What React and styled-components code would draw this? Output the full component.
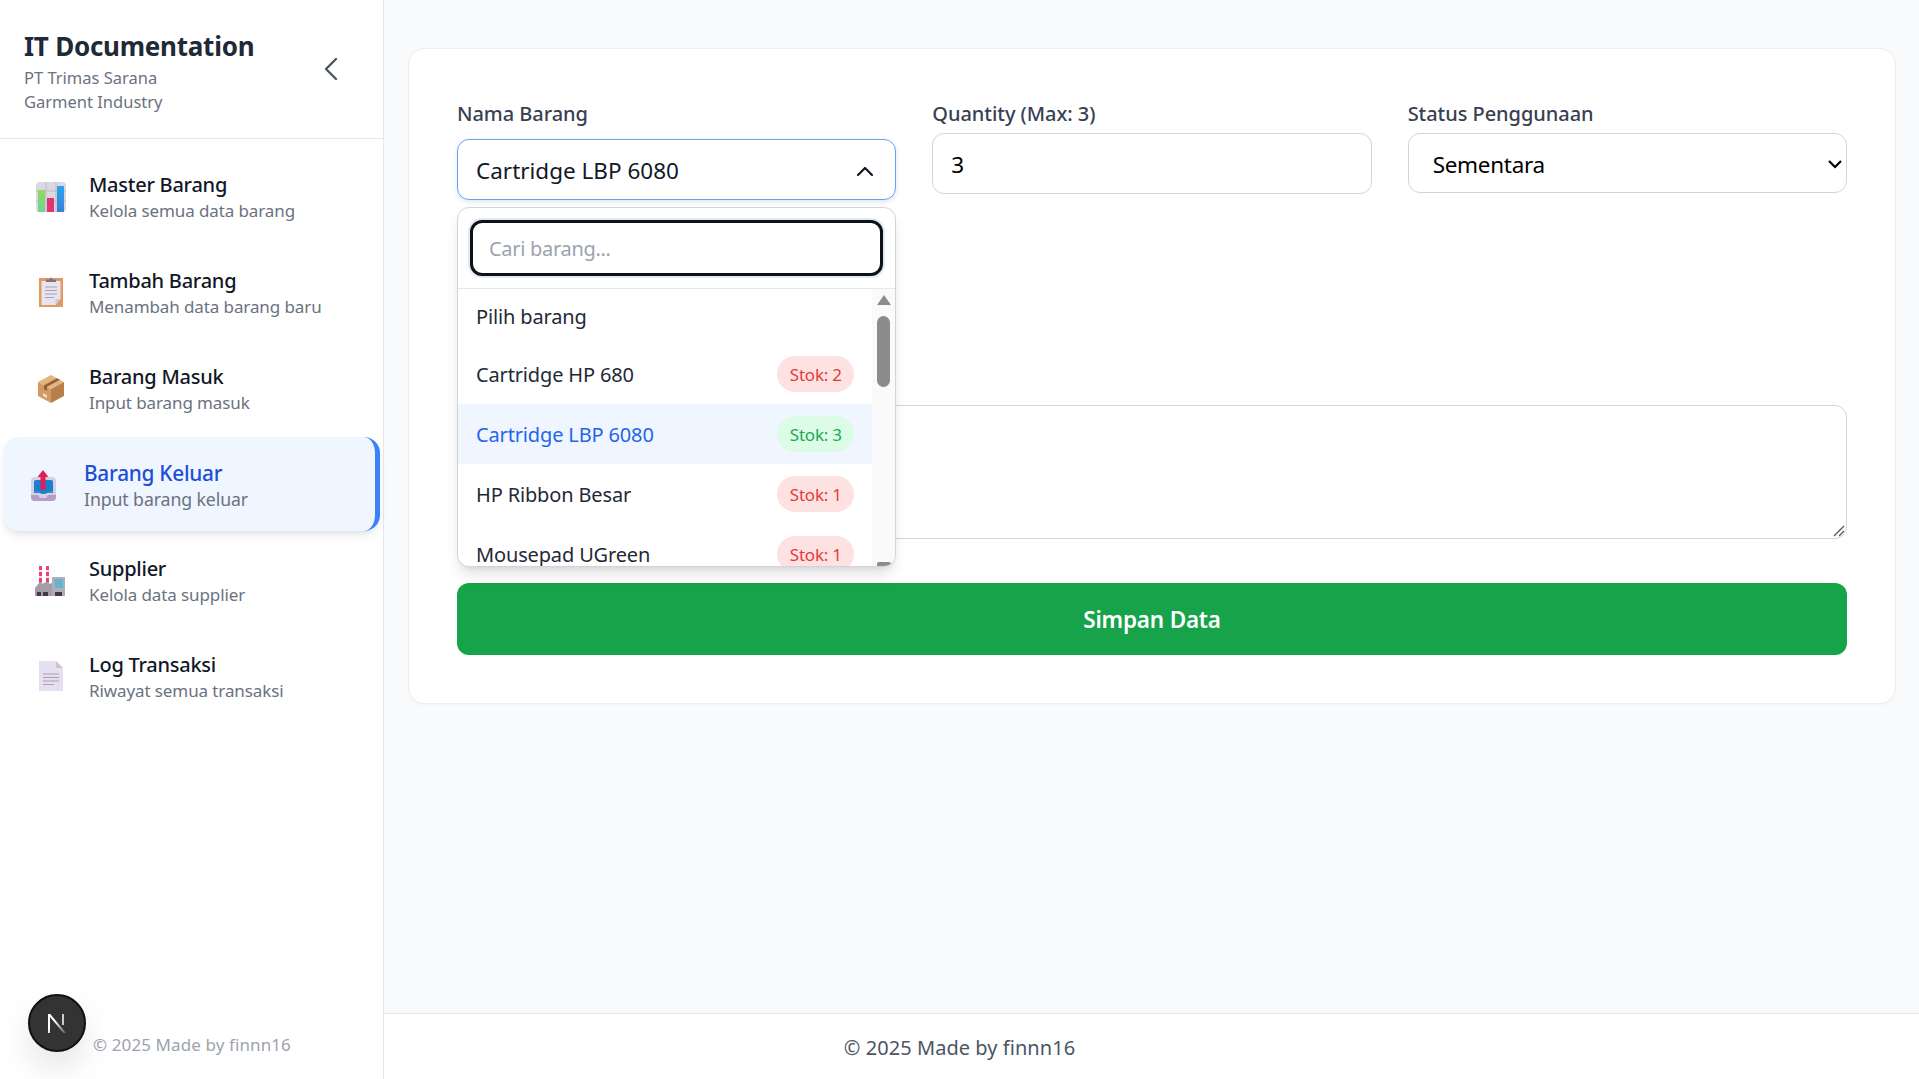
import React from "react"
import styled, { createGlobalStyle } from "styled-components"

const GlobalStyle = createGlobalStyle`
  * { box-sizing: border-box; }
  html, body { margin: 0; height: 100%; }
  body {
    font-family: "Noto Sans", "Open Sans", sans-serif;
    background: #f9fafb;
    color: #111827;
  }
`

const Shell = styled.div`
  position: relative;
  display: flex;
  height: 100vh;
  overflow: hidden;
`

const Sidebar = styled.aside`
  width: 384px;
  flex: none;
  display: flex;
  flex-direction: column;
  background: #fff;
  border-right: 1px solid #e5e7eb;
`

const SidebarHeader = styled.header`
  height: 139px;
  flex: none;
  display: flex;
  align-items: center;
  justify-content: space-between;
  padding: 0 41px 0 24px;
  border-bottom: 1px solid #e5e7eb;
`

const BrandBlock = styled.div`
  margin-top: 5px;
`

const Brand = styled.h1`
  margin: 0 0 3px;
  font-size: 26px;
  line-height: 34px;
  font-weight: 700;
  letter-spacing: -0.25px;
  color: #1f2937;
`

const Company = styled.p`
  margin: 0;
  width: 170px;
  font-size: 16.5px;
  line-height: 24px;
  color: #6b7280;
`

const Nav = styled.nav`
  flex: 1;
  display: flex;
  flex-direction: column;
  padding-top: 9px;
`

const NavItem = styled.a`
  height: 96px;
  flex: none;
  display: flex;
  align-items: center;
  gap: 22px;
  padding-left: ${p => (p.$active ? "28px" : "36px")};
  ${p => p.$active && `
    margin: 1px 3px 1px 3px;
    height: 94px;
    border-radius: 16px;
    background: #eff6ff;
    border-right: 5px solid #3b82f6;
    box-shadow: 0 6px 12px -3px rgba(0, 0, 0, 0.1), 0 3px 5px -2px rgba(0, 0, 0, 0.06);
  `}
`

const NavIcon = styled.svg`
  width: 32px;
  height: 32px;
  flex: none;
  margin-left: -1px;
  overflow: visible;
`

const NavText = styled.div`
  padding-top: 2px;
`

const NavTitle = styled.div`
  font-size: ${p => (p.$active ? "20.8px" : "20px")};
  line-height: 28px;
  font-weight: 500;
  letter-spacing: -0.25px;
  color: ${p => (p.$active ? "#1d4ed8" : "#111827")};
`

const NavSub = styled.div`
  font-size: ${p => (p.$active ? "17.7px" : "17px")};
  line-height: 24px;
  letter-spacing: -0.1px;
  color: #6b7280;
`

const SidebarFooter = styled.div`
  height: 46px;
  flex: none;
  padding: 0 0 0 93px;
  font-size: 17px;
  line-height: 24px;
  letter-spacing: 0.1px;
  color: #9ca3af;
`

const DevBadge = styled.div`
  position: absolute;
  left: 28px;
  top: 994px;
  width: 58px;
  height: 58px;
  display: flex;
  align-items: center;
  justify-content: center;
  border-radius: 50%;
  background: #333;
  border: 2px solid #111;
  box-shadow: 0 16px 32px rgba(0, 0, 0, 0.1);
`

const Main = styled.main`
  flex: 1;
  min-width: 0;
  display: flex;
  flex-direction: column;
`

const Content = styled.div`
  flex: 1;
  padding: 48px 23px 0 24px;
`

const Card = styled.section`
  height: 656px;
  padding: 48px;
  display: flex;
  flex-direction: column;
  background: #fff;
  border: 1px solid #eceef1;
  border-radius: 16px;
  box-shadow: 0 1px 2px rgba(0, 0, 0, 0.03);
`

const Fields = styled.div`
  display: grid;
  grid-template-columns: repeat(3, 1fr);
  column-gap: 36px;
  height: 308px;
  flex: none;
`

const Field = styled.div`
  position: relative;
  display: flex;
  flex-direction: column;
  align-items: stretch;
`

const Label = styled.label`
  height: 34px;
  font-size: 20px;
  line-height: 34px;
  font-weight: 500;
  letter-spacing: -0.05px;
  color: #374151;
`

const SelectButton = styled.div`
  height: 61px;
  margin-top: 8px;
  display: flex;
  align-items: center;
  justify-content: space-between;
  padding: 2px 21px 0 18px;
  border: 1px solid #60a5fa;
  border-radius: 12px;
  background: #fff;
  box-shadow: 0 2px 5px rgba(0, 0, 0, 0.1);
  font-size: 22.5px;
  color: #111827;
`

const TextBox = styled.div`
  height: ${p => (p.$select ? "60px" : "61px")};
  margin-top: 2px;
  display: flex;
  align-items: center;
  justify-content: space-between;
  padding: 2px ${p => (p.$select ? "3px" : "18px")} 0 ${p => (p.$select ? "24px" : "18px")};
  border: 1px solid #d1d5db;
  border-radius: 12px;
  background: #fff;
  font-size: 22.5px;
  letter-spacing: -0.3px;
  color: #000;
`

const Dropdown = styled.div`
  position: absolute;
  left: 0;
  right: 0;
  top: 110px;
  z-index: 5;
  height: 360px;
  display: flex;
  flex-direction: column;
  overflow: hidden;
  background: #fff;
  border: 1px solid #d1d5db;
  border-radius: 12px;
  box-shadow: 0 10px 15px -3px rgba(0, 0, 0, 0.12), 0 4px 6px -4px rgba(0, 0, 0, 0.1);
`

const SearchWrap = styled.div`
  height: 81px;
  flex: none;
  padding: 12px 12px 0;
  border-bottom: 1px solid #e5e7eb;
`

const SearchBox = styled.div`
  height: 56px;
  display: flex;
  align-items: center;
  padding: 0 16px;
  border: 3px solid #111;
  border-radius: 12px;
  box-shadow: 0 0 0 2px #dbeafe;
  font-size: 20px;
  letter-spacing: -0.3px;
  color: #9ca3af;
`

const ListArea = styled.div`
  flex: 1;
  min-height: 0;
  display: flex;
`

const List = styled.ul`
  flex: 1;
  min-width: 0;
  margin: 0;
  padding: 0;
  list-style: none;
  overflow: hidden;
`

const Option = styled.li`
  height: ${p => (p.$short ? "55px" : "60px")};
  display: flex;
  align-items: center;
  justify-content: space-between;
  padding: 0 18px;
  font-size: 20px;
  letter-spacing: -0.15px;
  color: ${p => (p.$selected ? "#2563eb" : "#1f2937")};
  background: ${p => (p.$selected ? "#eff6ff" : "transparent")};
`

const Stock = styled.span`
  height: 36px;
  width: 77px;
  display: flex;
  align-items: center;
  justify-content: center;
  border-radius: 18px;
  font-size: 17px;
  letter-spacing: -0.2px;
  color: ${p => (p.$ok ? "#22a855" : "#e23b3b")};
  background: ${p => (p.$ok ? "#dcfce7" : "#fee2e2")};
`

const Scrollbar = styled.div`
  width: 23px;
  flex: none;
  position: relative;
  display: flex;
  flex-direction: column;
  align-items: center;
  background: #fafafa;
`

const ScrollThumb = styled.div`
  width: 13px;
  height: 71px;
  margin-top: 11px;
  border-radius: 7px;
  background: #8c8c8c;
`

const ScrollArrow = styled.svg`
  width: 14px;
  height: 10px;
  margin-top: 6px;
  flex: none;
  fill: #8c8c8c;
`

const ScrollEnd = styled.div`
  position: absolute;
  bottom: 0;
  width: 14px;
  height: 4px;
  border-radius: 2px 2px 0 0;
  background: #8c8c8c;
`

const NoteRow = styled.div`
  height: 134px;
  flex: none;
  position: relative;
  border: 1px solid #d1d5db;
  border-radius: 12px;
`

const ResizeGrip = styled.svg`
  position: absolute;
  right: 1px;
  bottom: 1px;
  width: 14px;
  height: 14px;
  stroke: #555;
  stroke-width: 1.3;
`

const SaveButton = styled.button`
  height: 72px;
  margin-top: 44px;
  padding-top: 2px;
  flex: none;
  border: 0;
  border-radius: 12px;
  background: #16a34a;
  color: #fff;
  font-family: inherit;
  font-size: 22.5px;
  font-weight: 600;
  letter-spacing: -0.2px;
`

const PageFooter = styled.footer`
  height: 66px;
  flex: none;
  display: flex;
  align-items: center;
  justify-content: center;
  padding: 2px 384px 0 0;
  background: #fff;
  border-top: 1px solid #e5e7eb;
  font-size: 20px;
  letter-spacing: 0.05px;
  color: #4b5563;
`

const ChartIcon = () => (
  <NavIcon viewBox="0 0 32 32">
    <defs>
      <linearGradient id="gGreen" x1="0" y1="0" x2="0" y2="1">
        <stop offset="0" stopColor="#8fdc5c" />
        <stop offset="1" stopColor="#6cd49a" />
      </linearGradient>
      <linearGradient id="gBlue" x1="0" y1="0" x2="0" y2="1">
        <stop offset="0" stopColor="#2aa4f4" />
        <stop offset="1" stopColor="#3b7fd8" />
      </linearGradient>
    </defs>
    <rect x="1" y="2" width="30" height="30" rx="3.500" fill="#dcd8e2" />
    <path d="M11 2v30M21 2v30M1 11h30M1 21h30" stroke="#bdb9c6" strokeWidth="1" />
    <rect x="3" y="10" width="7" height="22" fill="url(#gGreen)" />
    <rect x="12" y="18" width="7" height="14" fill="#e5336f" />
    <rect x="22" y="6" width="7" height="26" fill="url(#gBlue)" />
  </NavIcon>
)

const ClipboardIcon = () => (
  <NavIcon viewBox="0 0 32 32">
    <rect x="4" y="2" width="24" height="29" fill="#e29a5c" />
    <path d="M6.500 5h19v18l-5 6h-14z" fill="#e8e3ef" />
    <path d="M25.500 23l-5 6v-6z" fill="#cfc6d8" />
    <path d="M10 11h12M10 14.500h12M10 18h12M10 21.500h9" stroke="#a79fb3" strokeWidth="1.200" />
    <path d="M11 6V3.500h3.500L16 1l1.500 2.500H21V6z" fill="#7d7480" />
  </NavIcon>
)

const BoxIcon = () => (
  <NavIcon viewBox="0 0 32 32">
    <path d="M16 3 29 10 16 17 3 10z" fill="#e6b57f" />
    <path d="M3 10 16 17V31L3 24z" fill="#d49a63" />
    <path d="M29 10 16 17V31L29 24z" fill="#b97f4a" />
    <path d="M9 13.200 22 6.200l3 1.600-13 7v4l-3-1.600z" fill="#94603a" />
    <path d="M8 21l4 2v3l-4-2z" fill="#e8dccf" />
  </NavIcon>
)

const OutboxIcon = () => (
  <NavIcon viewBox="0 0 32 32">
    <rect x="1" y="9" width="25" height="24" rx="4" fill="#d8cfe3" />
    <path d="M1 27h7l2 3h6l2-3h8v2a4 4 0 0 1-4 4H5a4 4 0 0 1-4-4z" fill="#b79cc9" />
    <rect x="4" y="12" width="19" height="13" rx="2" fill="#1b7fd0" />
    <path d="M4 23h5l2 3h5l2-3h5v2H4z" fill="#2a90da" />
    <path d="M13 2 18.500 9h-3v13h-5V9h-3z" fill="#e01e5a" />
  </NavIcon>
)

const FactoryIcon = () => (
  <NavIcon viewBox="0 0 32 32">
    <path d="M4 2h3v18H4zM11 2h3v18h-3z" fill="#f3dde6" />
    <path d="M4 2h3v4H4zM4 8h3v4H4zM4 14h3v4H4zM11 2h3v4h-3zM11 8h3v4h-3zM11 14h3v4h-3z" fill="#ea3f77" />
    <path d="M0 32V24l4-5v-1h3v2l4-2h3v2l3-1v13z" fill="#a49ca6" />
    <rect x="17" y="13" width="13" height="19" fill="#b2acb6" />
    <path d="M20 15h8v9h-8z" fill="#3fc0f0" />
    <path d="M22.700 15v9M25.300 15v9M20 18h8M20 21h8" stroke="#a49ca6" strokeWidth="0.800" />
    <path d="M2 28h4v4H2zM8 28h5v4H8zM20 28h7v4h-7z" fill="#433946" />
  </NavIcon>
)

const DocIcon = () => (
  <NavIcon viewBox="0 0 32 32">
    <path d="M4 1h17l7 7v23H4z" fill="#e6dff0" />
    <path d="M21 1l7 7h-7z" fill="#cbc2d6" />
    <path d="M8 14h16M8 17.500h16M8 21h16M8 24.500h11" stroke="#a99fb5" strokeWidth="1.200" />
  </NavIcon>
)

const navItems = [
  { title: "Master Barang", sub: "Kelola semua data barang", Icon: ChartIcon },
  { title: "Tambah Barang", sub: "Menambah data barang baru", Icon: ClipboardIcon },
  { title: "Barang Masuk", sub: "Input barang masuk", Icon: BoxIcon },
  { title: "Barang Keluar", sub: "Input barang keluar", Icon: OutboxIcon, active: true },
  { title: "Supplier", sub: "Kelola data supplier", Icon: FactoryIcon },
  { title: "Log Transaksi", sub: "Riwayat semua transaksi", Icon: DocIcon },
]

const options = [
  { name: "Cartridge HP 680", stock: 2 },
  { name: "Cartridge LBP 6080", stock: 3, selected: true },
  { name: "HP Ribbon Besar", stock: 1 },
  { name: "Mousepad UGreen", stock: 1 },
]

export default function App() {
  return (
    <>
      <GlobalStyle />
      <Shell>
        <Sidebar>
          <SidebarHeader>
            <BrandBlock>
              <Brand>IT Documentation</Brand>
              <Company>PT Trimas Sarana Garment Industry</Company>
            </BrandBlock>
            <svg width="22" height="26" viewBox="0 0 22 26" fill="none" stroke="#4b5563" strokeWidth="2.400" strokeLinecap="round" strokeLinejoin="round">
              <path d="M16 3 6 13l10 10" />
            </svg>
          </SidebarHeader>
          <Nav>
            {navItems.map(({ title, sub, Icon, active }) => (
              <NavItem key={title} $active={active}>
                <Icon />
                <NavText>
                  <NavTitle $active={active}>{title}</NavTitle>
                  <NavSub $active={active}>{sub}</NavSub>
                </NavText>
              </NavItem>
            ))}
          </Nav>
          <SidebarFooter>© 2025 Made by finnn16</SidebarFooter>
        </Sidebar>
        <Main>
          <Content>
            <Card>
              <Fields>
                <Field>
                  <Label>Nama Barang</Label>
                  <SelectButton>
                    Cartridge LBP 6080
                    <svg width="18" height="12" viewBox="0 0 18 12" fill="none" stroke="#111827" strokeWidth="2.200" strokeLinecap="round" strokeLinejoin="round">
                      <path d="M2 10 9 3l7 7" />
                    </svg>
                  </SelectButton>
                  <Dropdown>
                    <SearchWrap>
                      <SearchBox>Cari barang...</SearchBox>
                    </SearchWrap>
                    <ListArea>
                      <List>
                        <Option $short>Pilih barang</Option>
                        {options.map(o => (
                          <Option key={o.name} $selected={o.selected}>
                            {o.name}
                            <Stock $ok={o.stock > 2}>Stok: {o.stock}</Stock>
                          </Option>
                        ))}
                      </List>
                      <Scrollbar>
                        <ScrollArrow viewBox="0 0 14 10"><path d="M7 0 14 10H0z" /></ScrollArrow>
                        <ScrollThumb />
                        <ScrollEnd />
                      </Scrollbar>
                    </ListArea>
                  </Dropdown>
                </Field>
                <Field>
                  <Label>Quantity (Max: 3)</Label>
                  <TextBox>3</TextBox>
                </Field>
                <Field>
                  <Label>Status Penggunaan</Label>
                  <TextBox $select>
                    Sementara
                    <svg width="16" height="10" viewBox="0 0 16 10" fill="none" stroke="#000" strokeWidth="2.200">
                      <path d="M2 2l6 6 6-6" />
                    </svg>
                  </TextBox>
                </Field>
              </Fields>
              <NoteRow>
                <ResizeGrip viewBox="0 0 14 14"><path d="M13 3 3 13M13 8l-5 5" /></ResizeGrip>
              </NoteRow>
              <SaveButton>Simpan Data</SaveButton>
            </Card>
          </Content>
          <PageFooter>© 2025 Made by finnn16</PageFooter>
        </Main>
        <DevBadge>
          <svg width="24" height="24" viewBox="0 0 24 24">
            <defs>
              <linearGradient id="gN" x1="0" y1="0" x2="1" y2="1">
                <stop offset="0.4" stopColor="#fff" />
                <stop offset="1" stopColor="#fff" stopOpacity="0.2" />
              </linearGradient>
            </defs>
            <path d="M3 3h2.200L21 22h-2.500L5 6v16H3z" fill="url(#gN)" />
            <path d="M17 3h2v11h-2z" fill="#fff" opacity="0.750" />
          </svg>
        </DevBadge>
      </Shell>
    </>
  )
}
